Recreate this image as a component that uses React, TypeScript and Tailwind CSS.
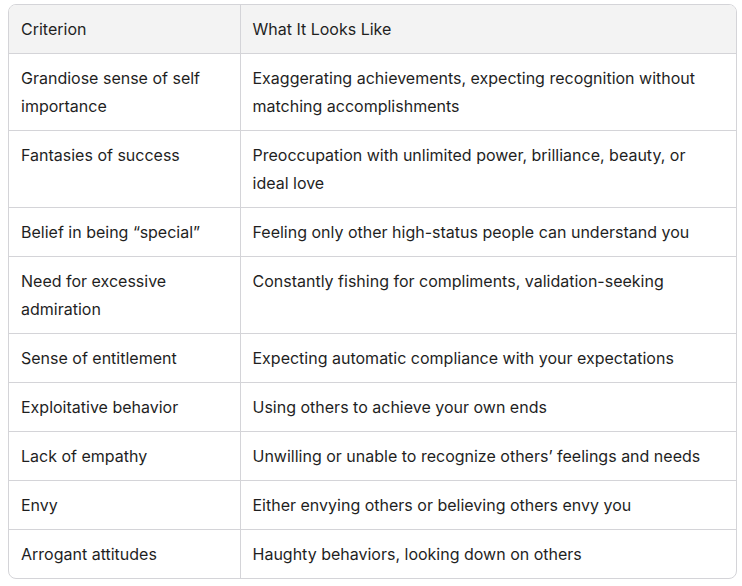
const rows: [string, string][] = [
  ["Grandiose sense of self importance", "Exaggerating achievements, expecting recognition without matching accomplishments"],
  ["Fantasies of success", "Preoccupation with unlimited power, brilliance, beauty, or ideal love"],
  ["Belief in being \u201cspecial\u201d", "Feeling only other high-status people can understand you"],
  ["Need for excessive admiration", "Constantly fishing for compliments, validation-seeking"],
  ["Sense of entitlement", "Expecting automatic compliance with your expectations"],
  ["Exploitative behavior", "Using others to achieve your own ends"],
  ["Lack of empathy", "Unwilling or unable to recognize others\u2019 feelings and needs"],
  ["Envy", "Either envying others or believing others envy you"],
  ["Arrogant attitudes", "Haughty behaviors, looking down on others"],
];

export default function App() {
  return (
    <div
      className="bg-white pl-2 pr-[5px] pt-1 text-base leading-7 text-[#1f1f1f]"
      style={{ fontFamily: "Inter, 'Noto Sans', sans-serif" }}
    >
      <div className="overflow-hidden rounded-lg border border-[#d4d4d8]">
        <table className="w-full border-collapse text-left">
          <colgroup>
            <col className="w-[231px]" />
            <col />
          </colgroup>
          <thead>
            <tr className="bg-[#f3f3f3]">
              <th className="border-r border-[#d4d4d8] px-3 py-2.5 font-normal">Criterion</th>
              <th className="px-3 py-2.5 font-normal">What It Looks Like</th>
            </tr>
          </thead>
          <tbody>
            {rows.map(([criterion, looks]) => (
              <tr key={criterion} className="border-t border-[#d4d4d8] align-top">
                <td className="border-r border-[#d4d4d8] px-3 py-2.5">{criterion}</td>
                <td className="px-3 py-2.5">{looks}</td>
              </tr>
            ))}
          </tbody>
        </table>
      </div>
    </div>
  );
}
